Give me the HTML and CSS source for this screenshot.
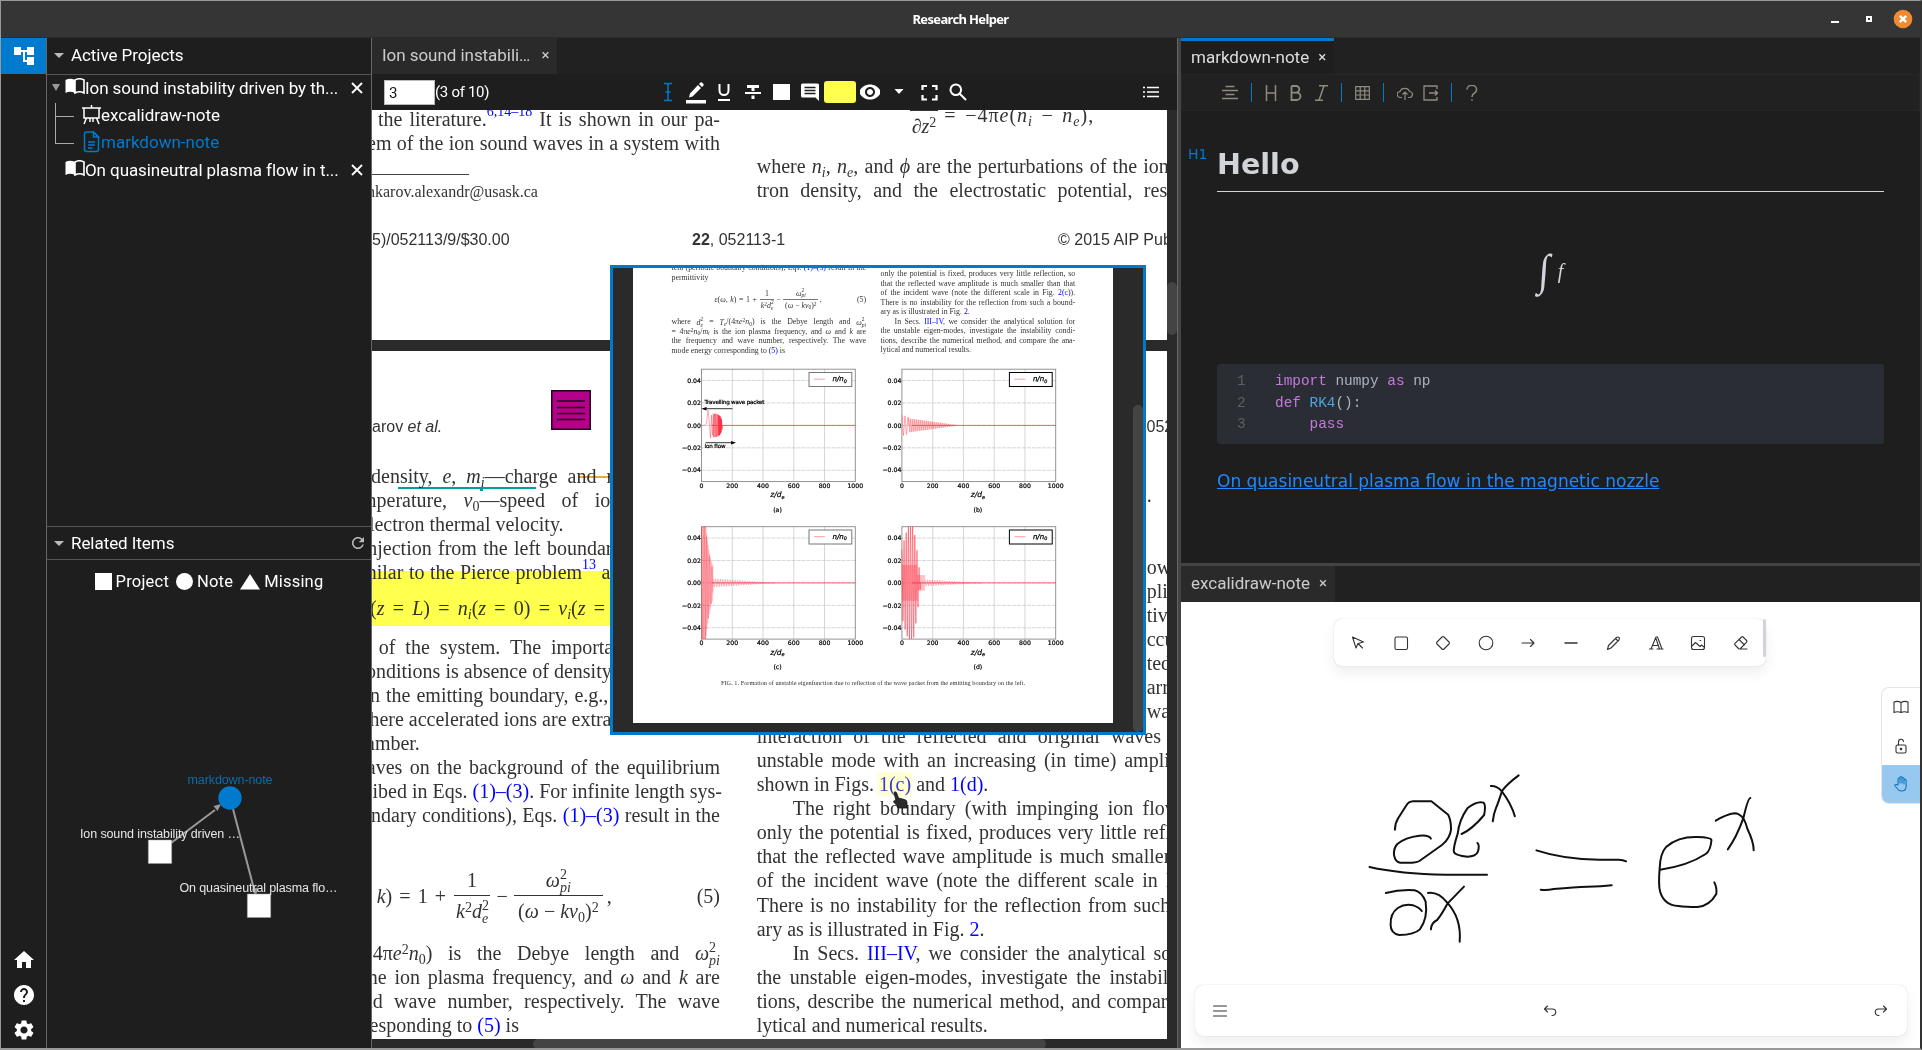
FILE: index.html
```html
<!DOCTYPE html>
<html lang="en">
<head>
<meta charset="utf-8">
<title>Research Helper</title>
<link rel="stylesheet" href="styles.css">
</head>
<body>
<div class="window">
  <header class="titlebar">
    <span class="title">Research Helper</span>
    <div class="controls">
      <svg width="18" height="20"><path d="M5 13h8" stroke="#fff" stroke-width="2"/></svg>
      <svg width="18" height="20"><rect x="7" y="8" width="4" height="4" fill="none" stroke="#fff" stroke-width="2"/></svg>
      <svg width="20" height="20"><circle cx="10" cy="10" r="9.3" fill="#f28a2e"/><path d="M6.8 6.8l6.4 6.4M13.2 6.8l-6.4 6.4" stroke="#fff" stroke-width="2.4"/></svg>
    </div>
  </header>
  <main class="app">
    <nav class="rail">
      <button class="rail-btn active"><svg width="24" height="24" viewBox="0 0 24 24" fill="#fff"><path d="M22 11V3h-7v3H9V3H2v8h7V8h2v10h4v3h7v-8h-7v3h-2V8h2v3z"/></svg></button>
      <span class="grow"></span>
      <button class="rail-btn low"><svg width="24" height="24" viewBox="0 0 24 24" fill="#fff"><path d="M10 20v-6h4v6h5v-8h3L12 3 2 12h3v8z"/></svg></button>
      <button class="rail-btn low"><svg width="24" height="24" viewBox="0 0 24 24" fill="#fff"><path d="M12 2C6.48 2 2 6.48 2 12s4.48 10 10 10 10-4.48 10-10S17.520 2 12 2zm1 17h-2v-2h2v2zm2.070-7.750l-.9.920C13.450 12.900 13 13.500 13 15h-2v-.5c0-1.100.45-2.100 1.170-2.830l1.240-1.260c.37-.36.59-.86.59-1.410 0-1.100-.9-2-2-2s-2 .9-2 2H8c0-2.210 1.790-4 4-4s4 1.790 4 4c0 .88-.36 1.680-.93 2.250z"/></svg></button>
      <button class="rail-btn low"><svg width="24" height="24" viewBox="0 0 24 24" fill="#fff"><path d="M19.140 12.940c.04-.3.06-.61.06-.94 0-.32-.02-.64-.07-.94l2.030-1.580c.18-.14.23-.41.12-.61l-1.920-3.320c-.12-.22-.37-.29-.59-.22l-2.390.96c-.5-.38-1.030-.7-1.620-.94l-.36-2.540c-.04-.24-.24-.41-.48-.41h-3.840c-.24 0-.43.17-.47.41l-.36 2.540c-.59.24-1.130.57-1.620.94l-2.390-.96c-.22-.08-.47 0-.59.22L2.740 8.870c-.12.210-.08.470.12.610l2.030 1.580c-.05.3-.09.63-.09.94s.02.64.07.94l-2.030 1.580c-.18.14-.23.41-.12.61l1.920 3.320c.12.22.37.29.59.22l2.390-.96c.5.38 1.030.7 1.620.94l.36 2.540c.05.24.24.41.48.41h3.840c.24 0 .44-.17.47-.41l.36-2.540c.59-.24 1.130-.56 1.620-.94l2.390.96c.22.08.47 0 .59-.22l1.920-3.320c.12-.22.07-.47-.12-.61l-2.010-1.580zM12 15.600c-1.980 0-3.600-1.620-3.600-3.600s1.620-3.600 3.600-3.600 3.600 1.620 3.600 3.600-1.620 3.600-3.600 3.600z"/></svg></button>
    </nav>

    <aside class="side">
      <section class="projects">
        <h2 class="side-head"><i class="caret"></i><span>Active Projects</span></h2>
        <ul class="tree">
          <li class="row root"><span class="tri"></span>
            <svg class="book" width="20" height="17"><path d="M.5 2Q5-.5 10 2v13Q5 12.500 .5 15z" fill="#fff"/><path d="M10 2q4.500-2.500 9 0v13q-4.500-2.500-9 0z" fill="none" stroke="#fff" stroke-width="1.600"/></svg>
            <span class="name">Ion sound instability driven by th...</span><svg class="x" width="12" height="12"><path d="M1 1l10 10M11 1L1 11" stroke="#fff" stroke-width="1.800"/></svg></li>
          <li class="row child">
            <svg width="19" height="20" fill="none" stroke="#fff" stroke-width="1.500"><path d="M0 3h19M2 3v10h15V3M9.500 0v3M4.500 13l-2.500 6M14.500 13l2.500 6M8 13v4M11 13v4"/></svg>
            <span class="name">excalidraw-note</span></li>
          <li class="row child last current">
            <svg width="19" height="22" fill="none" stroke="#007acc" stroke-width="1.500"><path d="M11.500 1H4.500Q2.500 1 2.500 3v15.500q0 2 2 2h10q2 0 2-2V6z"/><path d="M11.500 1v5h5zM6 11h7M6 14h7M6 17h4.500" /></svg>
            <span class="name">markdown-note</span></li>
          <li class="row root"><span class="tri none"></span>
            <svg class="book" width="20" height="17"><path d="M.5 2Q5-.5 10 2v13Q5 12.500 .5 15z" fill="#fff"/><path d="M10 2q4.500-2.500 9 0v13q-4.500-2.500-9 0z" fill="none" stroke="#fff" stroke-width="1.600"/></svg>
            <span class="name">On quasineutral plasma flow in t...</span><svg class="x" width="12" height="12"><path d="M1 1l10 10M11 1L1 11" stroke="#fff" stroke-width="1.800"/></svg></li>
        </ul>
      </section>
      <section class="related">
        <h2 class="side-head short"><i class="caret"></i><span>Related Items</span>
          <svg class="reload" width="12" height="12" viewBox="4 4 16 16"><path d="M17.650 6.350C16.200 4.900 14.210 4 12 4c-4.420 0-7.990 3.580-7.990 8s3.570 8 7.990 8c3.730 0 6.840-2.550 7.730-6h-2.080c-.82 2.330-3.040 4-5.650 4-3.310 0-6-2.690-6-6s2.690-6 6-6c1.660 0 3.140.69 4.220 1.780L13 11h7V4z" fill="#bbb"/></svg></h2>
        <div class="legend">
          <span><svg width="17" height="17"><path d="M0 0h17v17H0z" fill="#fff"/></svg>Project</span>
          <span><svg width="17" height="17"><circle cx="8.500" cy="8.500" r="8.500" fill="#fff"/></svg>Note</span>
          <span><svg width="20" height="17"><path d="M10 1l10 15.500H0z" fill="#fff"/></svg>Missing</span>
        </div>
        <svg class="graph" width="324" height="445" viewBox="47 603 324 445">
          <g stroke="#999" stroke-width="2"><path d="M171 843L215 810"/><path d="M233 809L254 889"/></g>
          <path d="M221 804l-7.500 2 4 5zM256 896l-4.500-7 6.500-1.500z" fill="#999"/>
          <circle cx="230" cy="798" r="11.700" fill="#007acc"/>
          <path d="M148.300 840h23.400v23.500h-23.400zM247.300 894h23.400v23.500h-23.400z" fill="#fff" stroke="#999" stroke-width=".5"/>
          <text x="230" y="783.500" textLength="85">markdown-note</text>
          <text x="160" y="837.500" textLength="160">Ion sound instability driven …</text>
          <text x="258.500" y="891.500" textLength="158">On quasineutral plasma flo…</text>
        </svg>
      </section>
    </aside>

    <section class="viewer">
      <div class="tabs"><div class="tab dim"><span class="fit-doc">Ion sound instabili…</span><b>×</b></div></div>
      <div class="pdfbar">
        <span class="pageno">3</span><span class="count">(3 of 10)</span>
        <div class="tools">
          <svg width="16" height="20" fill="none" stroke="#007acc" stroke-width="1.500"><path d="M4 1.500h3l1 1 1-1h3M4 18.500h3l1-1 1 1h3M8 2v16M5.500 10h5"/></svg>
          <svg width="22" height="24"><path d="M1 20h20v3.500H1z" fill="#fff"/><path d="M4 17.500l1-4L13 5l3 3-8.500 8.500zM14 4l1.500-1.500q.7-.5 1.400 0l1.600 1.600q.5.7 0 1.400L17 7z" fill="#fff"/></svg>
          <svg width="14" height="20" fill="none" stroke="#fff" stroke-width="2"><path d="M2.500 2v6.500a4.500 4.500 0 0 0 9 0V2M1 18h12"/></svg>
          <svg width="16" height="18" fill="#fff"><path d="M2 2h12v3H9.500v3h-3V5H2zM0 9h16v2H0zM6.500 12.500h3V16h-3z"/></svg>
          <svg width="17" height="17"><path d="M0 0h17v16H0z" fill="#fff"/></svg>
          <svg width="18" height="18"><path d="M0 2q0-1.500 1.500-1.500h15Q18 .5 18 2v16l-3.500-3.500h-13Q0 14.500 0 13z" fill="#fff"/><path d="M3.500 4.500h11M3.500 7.500h11M3.500 10.500h11" stroke="#1e1e1e" stroke-width="1.500"/></svg>
          <span class="swatch"></span>
          <svg width="20" height="20" viewBox="2 2 20 20" fill="#fff"><path d="M12 4.500C7 4.500 2.730 7.610 1 12c1.730 4.390 6 7.500 11 7.500s9.270-3.110 11-7.500c-1.730-4.390-6-7.500-11-7.500zM12 17c-2.760 0-5-2.240-5-5s2.240-5 5-5 5 2.240 5 5-2.240 5-5 5zm0-8c-1.660 0-3 1.340-3 3s1.340 3 3 3 3-1.340 3-3-1.340-3-3-3z"/></svg>
          <svg width="10" height="6"><path d="M.5 0h9L5 5z" fill="#fff"/></svg>
          <svg width="17" height="17" fill="none" stroke="#fff" stroke-width="2.200"><path d="M1.500 6V2H6M11 2h4.500v4M15.500 11v4.500H11M6 15.500H1.500V11"/></svg>
          <svg width="18" height="18" fill="none" stroke="#fff" stroke-width="2"><circle cx="6.800" cy="6.800" r="5.300"/><path d="M10.500 10.500l6.500 6.500"/></svg>
        </div>
        <svg class="outline" width="16" height="12" stroke="#fff" stroke-width="1.700"><path d="M0 1.500h2M4 1.500h12M0 6h2M4 6h12M0 10.500h2M4 10.500h12"/></svg>
      </div>
      <div class="doc">
        <div class="pages">
          <article class="page first">
            <div class="cols">
              <div class="left">
                <p style="--x:6px">the literature.<a class="up">6,14–18</a> It is shown in our pa-</p>
                <p style="--x:-5px">em of the ion sound waves in a system with</p>
                <hr>
                <div class="mail">hkarov.alexandr@usask.ca</div>
              </div>
              <div class="right">
                <div class="eq0"><span class="frac"><span></span><span><i>∂z</i><sup>2</sup></span></span><span class="eq0-rest">= −4π<i>e</i>(<i>n<sub>i</sub></i> − <i>n<sub>e</sub></i>),</span></div>
                <p>where <i>n<sub>i</sub></i>, <i>n<sub>e</sub></i>, and <i>ϕ</i> are the perturbations of the ion and elec-</p>
                <p style="--r:5px">tron density, and the electrostatic potential, respectively.</p>
              </div>
            </div>
            <footer class="imprint"><span>5)/052113/9/$30.00</span><span><b>22</b>, 052113-1</span><span>© 2015 AIP Publishing LLC</span></footer>
          </article>
          <article class="page second">
            <div class="running"><span>karov <i>et al.</i></span><span>052113-3</span></div>
            <svg class="note" width="40" height="40"><rect x=".75" y=".75" width="38.500" height="38.500" fill="#b5008c" stroke="#200018" stroke-width="1.500"/><path d="M6 11h28M6 17.500h28M6 23.500h28M6 29.500h28" stroke="#200018" stroke-width="1.300"/></svg>
            <div class="cols">
              <div class="left">
                <p style="--x:-1px;--r:98px">density, <i>e</i>, <i>m<sub>i</sub></i>—charge and m</p>
                <p style="--x:-11px;--r:92px">mperature, <i>v</i><sub>0</sub>—speed of ions</p>
                <p class="ragged" style="--x:-12px">electron thermal velocity.</p>
                <p style="--x:-10.3px;--r:97.500px">injection from the left boundary</p>
                <p style="--x:-24.200px;--r:109.500px">similar to the Pierce problem<a class="up">13</a> a</p>
                <p class="cond" style="--x:-2px;--r:115px"><span>(<i>z</i></span> = <span><i>L</i>)</span> = <span><i>n<sub>i</sub></i>(<i>z</i></span> = 0) = <span><i>v<sub>i</sub></i>(<i>z</i></span> =</p>
                <p style="--x:6.700px;--r:91.200px">of the system. The important</p>
                <p style="--x:-15px;--r:108.300px">conditions is absence of density</p>
                <p style="--x:-2px;--r:111.700px">n the emitting boundary, e.g.,</p>
                <p style="--x:-17px;--r:107.300px">where accelerated ions are extrac</p>
                <p class="ragged" style="--x:-6px">amber.</p>
                <p style="--x:-19.700px">waves on the background of the equilibrium</p>
                <p style="--x:.5px">ibed in Eqs. <a>(1)–(3)</a>. For infinite length sys-</p>
                <p style="--x:-1px">ndary conditions), Eqs. <a>(1)–(3)</a> result in the</p>
                <div class="eq5"><span class="lhs"><i>k</i>) = 1 +</span><span class="frac a"><span>1</span><span><i>k</i><sup>2</sup><i>d</i><span class="ss"><span>2</span><i>e</i></span></span></span><span class="minus">−</span><span class="frac b"><span><i>ω</i><span class="ss"><span>2</span><i>pi</i></span></span><span>(<i>ω</i> − <i>kv</i><sub>0</sub>)<sup>2</sup></span></span><span class="comma">,</span><span class="num">(5)</span></div>
                <p style="--x:.7px">4π<i>e</i><sup>2</sup><i>n</i><sub>0</sub>) is the Debye length and <span class="nb"><i>ω</i><span class="ss"><span>2</span><i>pi</i></span></span></p>
                <p style="--x:-4.200px">he ion plasma frequency, and <i>ω</i> and <i>k</i> are</p>
                <p style="--x:-9.300px">nd wave number, respectively. The wave</p>
                <p class="ragged" style="--x:-2.500px">esponding to <a>(5)</a> is</p>
              </div>
              <div class="right">
                <div class="margin-bits"><p>.</p><p></p><p></p><p>ow</p><p>pli</p><p>tive</p><p>ccu</p><p>ted</p><p>arri</p><p>wav</p></div>
                <p style="--r:88.200px">interaction of the reflected and original waves</p>
                <p style="--r:45px">unstable mode with an increasing (in time) amplitude</p>
                <p class="ragged">shown in Figs. <a class="hot">1(c)</a> and <a>1(d)</a>.</p>
                <p style="--x:36px;--r:70px">The right boundary (with impinging ion flow</p>
                <p>only the potential is fixed, produces very little reflection, so</p>
                <p>that the reflected wave amplitude is much smaller than that</p>
                <p>of the incident wave (note the different scale in Fig. <a>2(c)</a>).</p>
                <p>There is no instability for the reflection from such a bound-</p>
                <p class="ragged">ary as is illustrated in Fig. <a>2</a>.</p>
                <p style="--x:36px">In Secs. <a>III–IV</a>, we consider the analytical solution for</p>
                <p>the unstable eigen-modes, investigate the instability condi-</p>
                <p>tions, describe the numerical method, and compare the ana-</p>
                <p class="ragged">lytical and numerical results.</p>
              </div>
            </div>
            <i class="mark yellow"></i><i class="mark teal"></i><i class="mark tick"></i><i class="mark strike"></i>
          </article>
        </div>
        <div class="vtrack"><i></i></div>
        <div class="htrack"><i></i></div>

        <div class="peek">
          <article class="mini">
            <div class="mini-cols">
              <div class="mcol l">
                <p>tem (periodic boundary conditions), Eqs. <a>(1)–(3)</a> result in the</p>
                <p class="ragged">permittivity</p>
                <div class="eq5"><span class="lhs"><i>ε</i>(<i>ω</i>, <i>k</i>) = 1 +</span><span class="frac a"><span>1</span><span><i>k</i><sup>2</sup><i>d</i><span class="ss"><span>2</span><i>e</i></span></span></span><span class="minus">−</span><span class="frac b"><span><i>ω</i><span class="ss"><span>2</span><i>pi</i></span></span><span>(<i>ω</i> − <i>kv</i><sub>0</sub>)<sup>2</sup></span></span><span class="comma">,</span><span class="num">(5)</span></div>
                <p>where <span class="nb"><i>d</i><span class="ss"><span>2</span><i>e</i></span></span> = <i>T<sub>e</sub></i>/(4π<i>e</i><sup>2</sup><i>n</i><sub>0</sub>) is the Debye length and <span class="nb"><i>ω</i><span class="ss"><span>2</span><i>pi</i></span></span></p>
                <p>= 4π<i>e</i><sup>2</sup><i>n</i><sub>0</sub>/<i>m<sub>i</sub></i> is the ion plasma frequency, and <i>ω</i> and <i>k</i> are</p>
                <p>the frequency and wave number, respectively. The wave</p>
                <p class="ragged">mode energy corresponding to <a>(5)</a> is</p>
              </div>
              <div class="mcol r">
                <p>only the potential is fixed, produces very little reflection, so</p>
                <p>that the reflected wave amplitude is much smaller than that</p>
                <p>of the incident wave (note the different scale in Fig. <a>2(c)</a>).</p>
                <p>There is no instability for the reflection from such a bound-</p>
                <p class="ragged">ary as is illustrated in Fig. <a>2</a>.</p>
                <p style="--x:14px">In Secs. <a>III–IV</a>, we consider the analytical solution for</p>
                <p>the unstable eigen-modes, investigate the instability condi-</p>
                <p>tions, describe the numerical method, and compare the ana-</p>
                <p class="ragged">lytical and numerical results.</p>
              </div>
            </div>
            <svg class="plots" id="plots" width="480" height="314" viewBox="633 361 480 314"></svg>
            <p class="caption">FIG. 1. Formation of unstable eigenfunction due to reflection of the wave packet from the emitting boundary on the left.</p>
          </article>
          <i class="peek-thumb"></i>
        </div>
        <svg class="pointer" width="16" height="20"><path d="M1 1.500q1-1.500 2.500 0L5.500 7l6 1.500q2.500.5 2.500 3V17H5l-.5-2-3.500-3.500q-1-1.500.5-2l1.500.5z" fill="#2b2b2b" stroke="#111" stroke-width=".8"/></svg>
      </div>
    </section>

    <section class="right-dock">
      <div class="pane md">
        <div class="tabs"><div class="tab on"><span class="fit-md">markdown-note</span><b>×</b></div></div>
        <div class="mdbar">
          <svg width="16" height="16"><path d="M3.500 1.500h9M0 5.500h16M3.500 9.500h9M0 13.500h16"/></svg><i></i>
          <svg width="12" height="16"><path d="M1.500 0v16M10.500 0v16M1.500 8h9"/></svg>
          <svg width="12" height="16" stroke-width="1.800"><path d="M1.500 1v14h5a4 3.700 0 0 0 0-7.400H1.500M1.500 1h4.500a3.300 3.300 0 0 1 0 6.600"/></svg>
          <svg width="13" height="16"><path d="M4 .8h9M0 15.200h8M9 .8L4 15.200"/></svg><i></i>
          <svg width="15" height="14" stroke-width="1.200"><path d="M.7.7h13.600v12.600H.7zM.7 4.800h13.600M.7 9h13.600M5.200.7v12.600M9.800.7v12.600"/></svg><i></i>
          <svg width="16" height="14" stroke-width="1.200"><path d="M5 11.500H3.500a3 3 0 0 1-.5-6 5 4.500 0 0 1 9.500 0 3 3 0 0 1 0 6H11M8 14V6M5.500 8.500L8 6l2.500 2.500"/></svg>
          <svg class="export" width="15" height="16" stroke-width="1.300"><path d="M14 4V1H1v14h13v-3M6 8h9M12 5.500L14.500 8 12 10.500"/></svg><i></i>
          <svg class="help" width="12" height="16"><path d="M1 4.500a4.800 4.300 0 0 1 9.600 0Q10.600 7 8 8.500q-2 1-2 3.500M6 14.200v1.500"/></svg>
        </div>
        <div class="md-body">
          <div class="h1"><small>H1</small>Hello</div>
          <div class="math"><span>∫</span><i>f</i></div>
          <div class="code">
            <div class="ln"><u>1</u><code><b>import</b> numpy <b>as</b> np</code></div>
            <div class="ln"><u>2</u><code><b>def</b> <em>RK4</em>():</code></div>
            <div class="ln"><u>3</u><code>    <b>pass</b></code></div>
          </div>
          <a class="ref">On quasineutral plasma flow in the magnetic nozzle</a>
        </div>
      </div>
      <div class="pane ex">
        <div class="tabs"><div class="tab dim"><span class="fit-md">excalidraw-note</span><b>×</b></div></div>
        <div class="board">
          <svg class="ink" width="739" height="446" viewBox="0 0 739 446">
            <g transform="translate(-11 158) scale(.4796 .33333)" fill="none" stroke="#111" stroke-width="2" stroke-linecap="round" stroke-linejoin="round">
              <path d="M469 209Q469 190 476 174L493 136Q497 125 507 124H545L580 164Q586 180 586 208Q584 235 567 255L520 303Q515 307 505 308H480Q470 307 467 285Q466 265 474 252Q490 232 520 227Q540 224 544 236"/>
              <path d="M608 222Q630 208 655 165Q659 135 654 128Q640 122 620 145Q603 180 600 220Q590 265 592 277Q596 287 620 290Q638 290 642 275Q646 255 641 249"/>
              <path d="M669 78Q682 77 692 94Q712 132 719 169M727 46Q700 75 692 94Q684 130 680 143Q675 160 673 184"/>
              <path d="M416 321Q480 342 575 344L661 344"/>
              <path d="M450 399Q480 388 510 391Q525 396 533 425Q538 475 521 508Q510 524 478 525Q460 520 460 495Q459 460 475 444Q490 430 507 436Q520 442 525 453"/>
              <path d="M538 399Q560 395 578 428Q608 475 604 545M613 380L579 430Q566 465 557 480Q545 488 544 508"/>
              <path d="M764 271Q820 298 895 299H935Q945 300 951 304M773 389Q785 392 800 387Q845 381 870 380Q900 380 921 376"/>
              <path d="M1022 329Q1080 317 1117 282Q1127 273 1129 240Q1128 232 1100 231Q1060 229 1035 260Q1022 280 1021 325Q1018 375 1022 395Q1030 435 1060 438Q1075 441 1100 441Q1125 438 1139 402Q1141 385 1135 367"/>
              <path d="M1138 182Q1160 163 1177 160Q1187 160 1196 176Q1201 190 1204 207Q1217 245 1217 271M1210 114Q1205 115 1196 172Q1182 230 1163 268"/>
            </g>
          </svg>
          <div class="shapes">
            <svg viewBox="0 0 20 20"><path d="M4.500 4l3.500 11 2-4.500L15.500 9zM10 10.500l4.500 4.500"/></svg>
            <svg viewBox="0 0 20 20"><rect x="4" y="4" width="12.500" height="12.500" rx="1.500"/></svg>
            <svg viewBox="0 0 20 20"><path d="M9 4q1-1 2 0l5 5q1 1 0 2l-5 5q-1 1-2 0l-5-5q-1-1 0-2z"/></svg>
            <svg viewBox="0 0 20 20"><circle cx="10" cy="10" r="6.800"/></svg>
            <svg viewBox="0 0 20 20"><path d="M4 10h12M12.500 6.500L16 10l-3.500 3.500"/></svg>
            <svg viewBox="0 0 20 20"><path d="M4 10h12" stroke-width="1.500"/></svg>
            <svg viewBox="0 0 20 20"><path d="M4.500 16.500l1-4 8-8q1.500-1 2.500 0t0 2.500l-8 8zM12.500 5.500l2.500 2.500"/></svg>
            <svg viewBox="0 0 20 20"><path d="M3.500 16h3.500M11 16h6M5 16L10 4h1.500l4.500 12M6.500 12.500h6M10 5.500l3.500 10.500"/></svg>
            <svg viewBox="0 0 20 20"><rect x="3.500" y="3.500" width="13" height="13" rx="2"/><path d="M4 13l3.500-3.500 4.500 4 1.500-1.500 2.500 2M12 7.500h.8"/></svg>
            <svg viewBox="0 0 20 20"><path d="M16 16H8l-4-4q-.8-.8 0-1.600L10.500 4q.8-.8 1.600 0l3.500 3.500q.8.8 0 1.600L9.500 15.500M8 6.500l5.500 5.500"/></svg>
            <i class="bar"></i>
          </div>
          <div class="dock">
            <span><svg viewBox="0 0 20 20"><path d="M10 5.500Q6.500 3.500 3 5v10.500q3.500-1.500 7 0 3.500-1.500 7 0V5q-3.500-1.500-7 .5zv10M3 5v10.500M17 5v10.500"/></svg></span>
            <span><svg viewBox="0 0 20 20"><rect x="5" y="9" width="10" height="8" rx="1.500"/><path d="M7.500 9V6a2.500 2.500 0 0 1 5-.5"/><circle cx="10" cy="13" r=".8"/></svg></span>
            <span class="sel"><svg viewBox="0 0 20 20"><path d="M7 11V5a1 1 0 0 1 2 0v4-5.500a1 1 0 0 1 2 0V9 4.500a1 1 0 0 1 2 0V10 6.500a1 1 0 0 1 2.200 0V12q0 5-4.500 5-3 0-4.500-2.500L4 12q-.6-1.600 1-1.500z"/></svg></span>
          </div>
          <div class="bottom">
            <svg viewBox="0 0 20 20"><path d="M3.500 5h13M3.500 10h13M3.500 15h13"/></svg>
            <svg viewBox="0 0 20 20"><path d="M7.500 5L4.500 8l3 3M5 8h7.500a3 3 0 0 1 0 6.500H12"/></svg>
            <svg viewBox="0 0 20 20"><path d="M12.500 5l3 3-3 3M15 8H7.500a3 3 0 0 0 0 6.500H8"/></svg>
          </div>
        </div>
      </div>
    </section>
  </main>
</div>
<script src="plots.js"></script>
</body>
</html>
```
FILE: styles.css
```css
*{box-sizing:border-box}
body{margin:0;background:#1e1e1e;color:#fff;font-family:Roboto,sans-serif;font-size:16px}
svg{display:block;flex:none}
p,ul,h2{margin:0;padding:0}
.window{width:1922px;height:1050px;display:flex;flex-direction:column;border:1px solid #999;border-right:2px solid #333;border-bottom:2px solid #999;overflow:hidden}
.titlebar{height:37px;flex:none;background:#353535;display:grid;grid-template-columns:1fr auto 1fr;align-items:center;border-bottom:1px solid #2b2b2b}
.title{grid-column:2;font:bold 13px "Noto Sans",sans-serif;letter-spacing:-.65px}
.controls{display:flex;gap:15.300px;justify-content:flex-end;align-items:center;padding-right:7px}
.app{flex:1;display:flex;min-height:0}
.rail{width:45px;display:flex;flex-direction:column;padding-bottom:1px}
.rail-btn{border:0;background:none;height:36px;padding:0;display:flex;justify-content:center;align-items:center}
.rail-btn.active{background:#007acc;padding-bottom:1px}
.rail-btn.low{height:34.800px}
.grow{flex:1}
.side{width:325px;border-left:1px solid #666;display:flex;flex-direction:column}
.projects{height:488px}
.side-head{height:37px;border-bottom:1px solid #555;font-weight:400;font-size:17px;display:flex;align-items:center;padding:0 6px 2px 7px}
.side-head.short{height:34px;border-top:1px solid #555;padding-bottom:0;padding-right:7px}
.side-head span{margin-left:7px;letter-spacing:-.06px}
.caret{border:5px solid transparent;border-top-color:#bbb;border-bottom:0}
.reload{margin-left:auto}
.tree{list-style:none;margin-top:-1px}
.row{height:27.500px;display:flex;align-items:center;font-size:17px}
.row.root{padding-left:5px}
.row.child{padding-left:35px;height:27.200px;position:relative}
.child::before{content:"";position:absolute;left:8px;top:1px;width:18px;height:13px;border:solid #aaa;border-width:0 0 1px 1px}
.child.last::before{top:-14px;height:28px}
.current{color:#007acc}
.tri{width:8px;margin-right:6px;border:4px solid transparent;border-top:7px solid #999;border-bottom:0}
.tri.none{border-color:transparent}
.name{white-space:nowrap;flex:none}
.root .name{width:253px;letter-spacing:-.08px}
.root .book{margin:-3px 0 0 -1px}
.root .x{margin-left:13px}
.related{flex:1}
.legend{display:flex;justify-content:center;gap:7px;height:43px;align-items:center;padding-bottom:1px}
.legend span{display:flex;gap:4px;align-items:center;font-size:16.500px;letter-spacing:.2px}
.graph text{font:12.500px "Liberation Sans",sans-serif;fill:#e6e6e6;text-anchor:middle}
.graph text:first-of-type{fill:#0a6cb0}
.viewer{width:807px;border:solid #666;border-width:0 1px;display:flex;flex-direction:column}
.tabs{height:36px;background:#212121;display:flex;flex:none}
.tab{display:flex;align-items:center;gap:11px;padding:0 8px 2px 10px;color:#ccc;font-size:16px}
.tab.dim{background:#2a2a2a}
.tab b{font-weight:400;font-size:15px}
.tab.on{background:#1e1e1e;border-top:3px solid #007acc;color:#ddd}
.right-dock .tab{gap:9px}
.fit-doc{font-size:17px;letter-spacing:-.05px}
.fit-md{font-size:17px}
.pdfbar{height:36px;display:flex;align-items:center;padding:0 18px 0 12px;flex:none}
.pageno{width:51px;height:25px;background:#fff;color:#111;padding:3px 4px;line-height:19px;border:1px solid #bbb;font-size:15px}
.count{width:225.200px;font-size:15px;letter-spacing:-.3px}
.tools{display:flex;align-items:center;flex:none}
.tools>*{margin-right:9.500px}
.tools>:nth-child(1){margin-right:9px}
.tools>:nth-child(2){margin-right:10px}
.tools>:nth-child(3){margin-right:14.200px}
.tools>:nth-child(4){margin-right:12px}
.tools>:nth-child(5){margin-right:11px}
.tools>:nth-child(6){margin-right:5px}
.tools>:nth-child(7){margin-right:4px}
.tools>:nth-child(8){margin-right:13.500px}
.tools>:nth-child(9){margin-right:17px}
.tools>:nth-child(10){margin-right:11px}
.swatch{width:32px;height:22px;border-radius:3px;background:#ffff4d;flex:none}
.outline{margin-left:auto}
.doc{flex:1;position:relative;display:grid;grid-template-columns:795px 10px;grid-template-rows:929px 9px;background:#2a2a2a;overflow:hidden}
.pages{display:flex;flex-direction:column;gap:11px;overflow:hidden}
.page{background:#fff;color:#333;font:20px/24.100px "Liberation Serif",serif;overflow:hidden;position:relative;flex:none}
.page.first{height:230px}
.page.second{height:688px}
.cols{display:flex}
.left{width:348px;flex:none}
.right{width:492.500px;flex:none;margin-left:36.700px}
.page p,.mini p{height:1.205em;white-space:nowrap;text-align:justify;text-align-last:justify;margin:0 var(--r,0) 0 var(--x,0)}
.page p.ragged,.mini p.ragged{text-align-last:left}
a{color:#0000ff}
sub,sup,.up{font-size:.7em;line-height:0}
sup{vertical-align:.45em}
.up{vertical-align:.7em}
sub{vertical-align:-.25em}
.ss{display:inline-flex;flex-direction:column;vertical-align:.6em;font-size:.7em;line-height:.95em;height:1em;text-align:left}
.nb{white-space:nowrap}
.first .cols{height:122px}
.first .left{margin-top:-3px}
hr{border:0;border-top:1.500px solid #444;width:97px;margin:18.500px 0 0}
.mail{font-size:16px;margin-top:5px;margin-left:-5px}
.eq0{height:45px;padding-left:153px;display:flex;margin-top:-1px;white-space:nowrap}
.eq0 .frac{margin-top:-29px}
.eq0-rest{margin:-6px 0 0 6px;letter-spacing:1px;word-spacing:2.500px}
.frac{display:inline-flex;flex-direction:column;align-items:center;white-space:nowrap}
.frac>span{height:1.550em;line-height:1.550em;padding:0 .1em;align-self:stretch;text-align:center}
.frac>span:first-child{border-bottom:1px solid #333}
.imprint,.running{font:16px/20px "Liberation Sans",sans-serif;display:grid;white-space:nowrap}
.imprint{grid-template-columns:320px 366px 200px;margin-top:-2px}
.running{grid-template-columns:774.500px 100px;padding-top:66px;height:113px}
.running span:first-child{margin-left:-8px}
.note{position:absolute;left:179px;top:39px}
.second .cols{position:relative;z-index:1}
.page .cond{margin-top:12px;margin-bottom:14px}
.eq5{display:flex;align-items:center;height:5.130em;line-height:1.200em}
.left .eq5{height:113.500px;padding-top:24px;padding-left:4.700px}
.eq5 .lhs{width:3.870em;padding-right:.4em;text-align:justify;text-align-last:justify;white-space:nowrap}
.eq5 .frac.a{width:1.800em}
.eq5 .minus{width:1.200em;text-align:center}
.eq5 .frac.b{width:4.430em}
.eq5 .comma{margin-left:.2em}
.eq5 .num{margin-left:auto}
.margin-bits{padding:18.500px 0 0 390px;height:259.900px}
.margin-bits p{text-align-last:left}
.hot{background:#ffffd0;color:#3a3acc;box-shadow:0 0 3px 1px #ffffd0}
.mark{position:absolute;mix-blend-mode:multiply;z-index:2}
.yellow{left:0;top:220px;width:240px;height:54.500px;background:#ffff4d}
.teal{left:26px;top:136px;width:138px;height:2px;background:#009e9e}
.tick{left:108px;top:138px;width:3px;height:2px;background:#009e9e}
.strike{left:207px;top:125px;width:34px;height:2px;background:#e0b030}
.vtrack i{display:block;width:10px;height:53px;margin-top:172px;border-radius:5px;background:#444}
.htrack{grid-column:1/3;display:flex}
.htrack i{width:513px;height:10px;border-radius:5px;background:#444;margin-left:161px}
.peek{position:absolute;z-index:5;left:238px;top:155px;width:536px;height:470px;border:3px solid #007acc;background:#2a2a2a;overflow:hidden;padding-left:20px;display:flex}
.mini{width:480px;height:455px;background:#fff;color:#333;font:7.840px/9.460px "Liberation Serif",serif;display:flex;flex-direction:column;flex:none}
.mini-cols{height:93px;display:flex;padding-left:38.500px;gap:14.500px;flex:none}
.mcol{width:194.600px}
.mcol p{height:9.500px}
.mcol.l{margin-top:-5px}
.mcol.r{margin-top:1px}
.mcol .eq5{height:35.300px;padding-left:43px}
.mcol .eq5 .lhs{width:5.800em}
.mcol .eq5 .frac>span:first-child{border-bottom-color:#777}
.plots{flex:none}
.mini .caption{margin:3px 88px 0;font-size:6.300px}
.peek-thumb{width:10px;height:327px;border-radius:5px;background:#444;margin:137px 0 0 19.500px}
.pointer{position:absolute;z-index:6;left:521px;top:681px}
.right-dock{flex:1;display:flex;flex-direction:column;border-left:3px solid #444;min-width:0}
.pane.md{height:525px;display:flex;flex-direction:column}
.pane.ex{flex:1;border-top:3px solid #444;display:flex;flex-direction:column}
.mdbar{height:37px;background:#212121;border:1px solid #262626;display:flex;align-items:center;padding-left:40px;fill:none;stroke:#8f8b80;stroke-width:1.500}
.mdbar i{width:1px;height:19px;background:#007acc;margin:0 13px}
.mdbar svg+svg{margin-left:13.200px}
.mdbar .export{margin-right:0}
.mdbar svg+.export{margin-left:9.500px}
.mdbar .help{margin-left:1.500px}
.md-body{padding:0 36px;flex:1;color:#d1d5da;font-family:"DejaVu Sans",sans-serif}
.h1{font-weight:700;font-size:28.600px;height:81px;padding-top:36px;line-height:34px;border-bottom:1px solid #d1d5da;position:relative}
.h1 small{position:absolute;left:-29px;top:33px;font:14px/20px "DejaVu Sans",sans-serif;color:#007acc}
.math{height:172px;display:flex;justify-content:center;align-items:center;padding-bottom:14px;font-family:"Liberation Serif",serif;font-size:20px;gap:8px}
.math span{font-size:44px;line-height:50px;transform:skewX(-4deg) scaleX(.88)}
.code{height:80px;border-radius:4px;padding:7px 20px;font:14.400px/21.600px "Liberation Mono",monospace;color:#abb2bf;background:#2a2e34}
.ln{display:flex}
.ln u{width:38px;text-decoration:none;color:#5c5f63}
.ln code{font:inherit;white-space:pre}
.ln b{font-weight:400;color:#c678dd}
.ln em{font-style:normal;color:#4aa5e0}
.ref{display:block;margin-top:27px;color:#2188ff;text-decoration:underline;font-size:17px;line-height:20px;white-space:nowrap}
.board{flex:1;background:#fff;position:relative}
.ink{position:absolute;left:0;top:0}
.ink path{vector-effect:non-scaling-stroke}
.shapes,.dock,.bottom{position:absolute;background:#fff;fill:none;stroke:#333;stroke-width:1.100;stroke-linecap:round;stroke-linejoin:round}
.shapes svg,.dock svg,.bottom svg{width:20px;height:20px}
.shapes{left:153px;top:17px;width:432px;height:47px;border-radius:8px;box-shadow:0 0 1px #0004,0 7px 14px #0001;display:flex;align-items:center;gap:22.500px;padding:0 0 0 14px}
.shapes .bar{position:absolute;right:0;top:0;width:3px;height:38px;border-radius:2px;background:#ced4da}
.dock{right:0;top:85px;width:39px;height:117px;border:1px solid #e6e6e6;border-right:0;border-radius:8px 0 0 8px;overflow:hidden}
.dock span{height:38.500px;display:flex;align-items:center;justify-content:center}
.dock .sel{background:#96c8f0;stroke:#1074bd}
.bottom{left:14px;right:13px;top:383px;height:51px;border-radius:8px;box-shadow:0 0 1px #0004,0 7px 14px #0001;display:flex;justify-content:space-between;align-items:center;padding:0 16px 0 14.500px}
```
FILE: plots.js
```js
// Draws the four density panels of the figure.
const svg = document.getElementById('plots');
const W = 153.8, H = 112.4, MID = 56.2, X = z => z * W / 1000, Y = v => MID - v * 1122;
const clamp = v => Math.max(-0.05, Math.min(0.05, v));

function wave(from, to, period, amp) {
  let d = '';
  for (let z = from; z <= to; z += period / 8) {
    const v = clamp(amp(z) * Math.cos(2 * Math.PI * (z - from) / period));
    d += (d ? 'L' : 'M') + X(z).toFixed(2) + ' ' + Y(v).toFixed(2);
  }
  return d;
}

// Each wave is [path, stroke width, opacity].
const panels = [
  { x: 701.5, y: 369.2, tag: '(a)', box: '#777', waves: [
    ['M0 56.2H4L5 54 6.500 41 8 56 9 69 10 46 11 66 12 46', 0.5, 0.8],
    [wave(75, 134, 9, z => 0.0105 * Math.sqrt(Math.max(0, 1 - Math.pow((z - 75) / 60, 3)))), 0.7, 0.8],
    [wave(110, 134, 5, z => 0.0105 * Math.sqrt(Math.max(0, 1 - Math.pow((z - 75) / 60, 3)))), 0.8, 0.9]] },
  { x: 901.9, y: 369.2, tag: '(b)', box: '#000', waves: [
    [wave(0, 45, 20, z => 0.0095 - z / 20000), 0.5, 0.8],
    [wave(45, 360, 13, z => 0.0062 * (1 - (z - 45) / 330)), 0.5, 0.8]] },
  { x: 701.5, y: 526.7, tag: '(c)', box: '#777', waves: [
    [wave(0, 30, 5, () => 0.05), 0.8, 0.22],
    [wave(28, 75, 5, z => 0.05 * Math.exp(-(z - 28) / 38)), 0.8, 0.22],
    [wave(0, 75, 17, z => z < 30 ? 0.05 : 0.05 * Math.exp(-(z - 28) / 32)), 0.5, 0.5],
    [wave(75, 480, 16, z => 0.0038 * (1 - (z - 75) / 420)), 0.4, 0.8]] },
  { x: 901.9, y: 526.7, tag: '(d)', box: '#000', waves: [
    [wave(0, 125, 14, z => 0.03 + 0.022 * Math.sin(z / 38) - (z > 75 ? (z - 75) * 0.00055 : 0)), 0.6, 0.85],
    [wave(0, 150, 6, z => z < 100 ? 0.016 : 0.007), 0.7, 0.22],
    [wave(150, 520, 16, z => 0.0028 * (1 - (z - 150) / 400)), 0.4, 0.8]] }
];

svg.innerHTML = panels.map(p => {
  let s = `<g transform="translate(${p.x} ${p.y})" font-family="DejaVu Sans" font-size="6.200">`;
  s += `<g stroke="#bbb" stroke-width=".6" fill="none">`;
  for (let z = 200; z < 1000; z += 200) s += `<path d="M${X(z)} 0V${H}"/>`;
  for (let k = -2; k <= 2; k++) s += `<path d="M0 ${Y(k * 0.02)}H${W}" stroke-dasharray="4 1"/>`;
  s += `</g><rect width="${W}" height="${H}" fill="none" stroke="#888" stroke-width=".9"/>`;
  s += `<g fill="none" stroke="#ff2a3c">` + p.waves.map(w => `<path d="${w[0]}" stroke-width="${w[1]}" stroke-opacity="${w[2]}"/>`).join('');
  s += `<path d="M10 ${MID}H${W}" stroke-width=".7"/></g><g fill="#000" stroke="#000" stroke-width=".22">`;
  for (let k = -2; k <= 2; k++)
    s += `<text x="-.5" y="${Y(k * 0.02) + 2.2}" text-anchor="end">${(k < 0 ? '−' : '') + Math.abs(k * 0.02).toFixed(2)}</text>`;
  for (let z = 0; z <= 1000; z += 200) s += `<text x="${X(z)}" y="118.500" text-anchor="middle">${z}</text>`;
  s += `<text x="76" y="128.300" text-anchor="middle" font-size="7.500" font-style="italic">z/d<tspan font-size="5" dy="1.500">e</tspan></text>`;
  s += `<text x="76" y="142.800" text-anchor="middle">${p.tag}</text></g>`;
  s += `<rect x="107.500" y="3.300" width="42.800" height="14" fill="#fff" stroke="${p.box}"/><path d="M112.500 10h11" stroke="#ff9da5"/>`;
  s += `<text x="131" y="12.300" font-size="7" font-style="italic" stroke="#000" stroke-width=".25">n/n<tspan font-size="4.800" dy="1.500">0</tspan></text>`;
  if (p.tag === '(a)')
    s += `<g font-size="5.600" stroke="#000" stroke-width=".22"><text x="3" y="35.300" textLength="60">Travelling wave packet</text><text x="3" y="78.500" textLength="21">Ion flow</text></g>` +
      `<path d="M2 39.500H31M4 73.500H32" stroke="#000" stroke-width=".8"/><path d="M0 39.500l5-1.700v3.400zM34.500 73.500l-5-1.700v3.400z"/>`;
  return s + '</g>';
}).join('');
```
